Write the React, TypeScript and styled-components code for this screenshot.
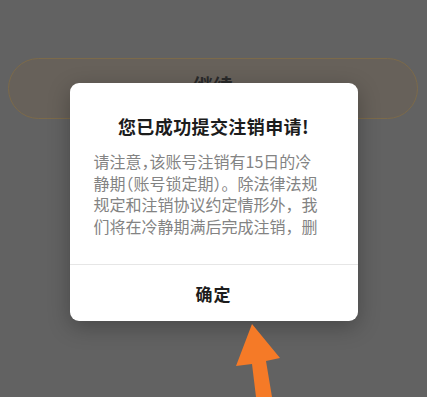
import React from 'react';
import styled, { createGlobalStyle } from 'styled-components';

const GlobalStyle = createGlobalStyle`
  html, body {
    margin: 0;
    padding: 0;
    background: #626262;
  }
  body {
    font-family: "Noto Sans CJK SC", "Noto Sans", sans-serif;
  }
`;

const Page = styled.div`
  position: relative;
  width: 427px;
  height: 397px;
  overflow: hidden;
  background: #626262;
  padding-top: 58px;
  box-sizing: border-box;
`;

const PillButton = styled.div`
  margin: 0 9px 0 8px;
  height: 61px;
  padding-bottom: 6px;
  box-sizing: border-box;
  border: 1.5px solid #7c6a4a;
  border-radius: 31px;
  background: #67615a;
  display: flex;
  align-items: center;
  justify-content: center;
  font-size: 20px;
  font-weight: 700;
  color: #2a2a2a;
`;

const Overlay = styled.div`
  position: absolute;
  inset: 0;
  display: flex;
  justify-content: center;
  align-items: flex-start;
  padding-top: 83px;
`;

const Dialog = styled.div`
  width: 288px;
  background: #fff;
  border-radius: 9px;
  box-shadow: 0 6px 22px rgba(0, 0, 0, 0.28);
  display: flex;
  flex-direction: column;
  overflow: hidden;
`;

const Title = styled.div`
  padding-top: 30px;
  line-height: 26px;
  font-size: 18px;
  font-weight: 700;
  color: #1c1c1c;
  text-align: center;
  letter-spacing: 0.4px;
`;

const Body = styled.div`
  margin: 10px 0 26px;
  padding: 2px 24px 0;
  height: 89px;
  box-sizing: border-box;
  overflow: hidden;
  font-size: 16px;
  line-height: 21.7px;
  color: #838383;
`;

const Line = styled.div`
  white-space: nowrap;
`;

const Narrow = styled.span`
  font-feature-settings: "halt";
`;

const Divider = styled.div`
  height: 1px;
  background: #e6e6e6;
`;

const Confirm = styled.div`
  height: 56px;
  padding-top: 1px;
  box-sizing: border-box;
  display: flex;
  align-items: center;
  justify-content: center;
  font-size: 17px;
  font-weight: 700;
  color: #1c1c1c;
  letter-spacing: 1px;
`;

const Arrow = styled.svg`
  position: absolute;
  left: 220px;
  top: 318px;
`;

export default function App() {
  return (
    <Page>
      <GlobalStyle />
      <PillButton>继续</PillButton>
      <Overlay>
        <Dialog>
          <Title>您已成功提交注销申请!</Title>
          <Body>
            <Line>请注意<Narrow>，</Narrow>该账号注销有15日的冷</Line>
            <Line>静期<Narrow>（</Narrow>账号锁定期<Narrow>）</Narrow>。除法律法规</Line>
            <Line>规定和注销协议约定情形外，我</Line>
            <Line>们将在冷静期满后完成注销，删</Line>
            <Line>除您的账号及相关数据信息。</Line>
          </Body>
          <Divider />
          <Confirm>确定</Confirm>
        </Dialog>
      </Overlay>
      <Arrow width="70" height="79" viewBox="220 318 70 79">
        <polygon
          points="252,324 280,358 266,361 272,397 256,397 252,364 236,366"
          fill="#f57a27"
        />
      </Arrow>
    </Page>
  );
}
